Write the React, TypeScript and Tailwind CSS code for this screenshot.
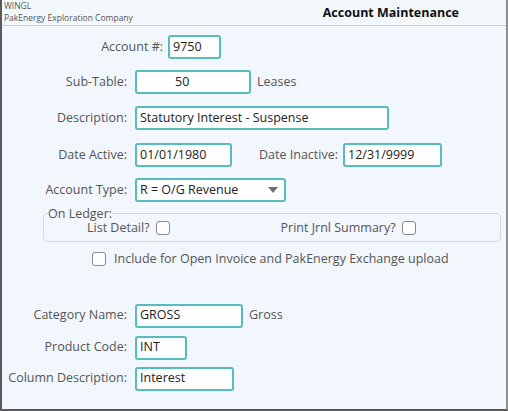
import React from 'react'

const font = { fontFamily: '"Open Sans", "Noto Sans", sans-serif' }

function Field({ value, className = '', pad = 'pl-[3px]' }: { value: string; className?: string; pad?: string }) {
  return (
    <div
      className={`h-[24px] flex items-center border-2 border-[#56bcbc] rounded-[3px] bg-white text-[12.5px] text-[#222] ${pad} ${className}`}
    >
      {value}
    </div>
  )
}

function Label({ text, className = 'w-[125px]' }: { text: string; className?: string }) {
  return <div className={`text-right text-[12.5px] text-[#555] shrink-0 ${className}`}>{text}</div>
}

function Check() {
  return <span className="inline-block w-[14px] h-[14px] border border-[#8a8a8a] rounded-[3px] bg-white" />
}

export default function App() {
  return (
    <div
      className="w-[508px] h-[411px] bg-[#f1f7fc] border-l-2 border-r-2 border-b-2 border-l-[#5a5a5a] border-r-[#8c8c8c] border-b-[#5a5a5a] flex flex-col overflow-hidden"
      style={font}
    >
      {/* Header */}
      <div className="h-[26px] shrink-0 flex items-start border-b border-[#c9cdd1] bg-[#f3f8fc]">
        <div className="pl-[2px] leading-[12px] text-[8.5px] text-[#555]">
          <div>WINGL</div>
          <div>PakEnergy Exploration Company</div>
        </div>
        <div className="ml-auto mr-[47px] mt-[4px] text-[12.5px] font-bold text-[#111]">Account Maintenance</div>
      </div>

      {/* Form */}
      <div className="flex flex-col pt-[9px]">
        <div className="flex items-center">
          <Label text="Account #:" className="w-[161px]" />
          <Field value="9750" className="ml-[5px] w-[53px]" />
        </div>

        <div className="flex items-center mt-[11px]">
          <Label text="Sub-Table:" />
          <Field value="50" className="ml-[8px] w-[116px]" pad="pl-[38px]" />
          <span className="ml-[6px] text-[12.5px] text-[#555]">Leases</span>
        </div>

        <div className="flex items-center mt-[12px]">
          <Label text="Description:" />
          <Field value="Statutory Interest - Suspense" className="ml-[8px] w-[254px]" />
        </div>

        <div className="flex items-center mt-[13px]">
          <Label text="Date Active:" />
          <Field value="01/01/1980" className="ml-[8px] w-[97px]" />
          <span className="ml-[27px] text-[12.5px] text-[#555]">Date Inactive:</span>
          <Field value="12/31/9999" className="ml-[5px] w-[99px]" />
        </div>

        <div className="flex items-center mt-[11px]">
          <Label text="Account Type:" />
          <div className="ml-[8px] w-[151px] h-[24px] flex items-center justify-between border-2 border-[#56bcbc] rounded-[3px] bg-white text-[12.5px] text-[#222] pl-[3px] pr-[6px]">
            <span>R = O/G Revenue</span>
            <svg width="10" height="6" viewBox="0 0 10 6">
              <path d="M0 0 L10 0 L5 6 Z" fill="#707070" />
            </svg>
          </div>
        </div>

        <fieldset className="ml-[41px] mr-[5px] mt-[3px] border border-[#d3d7db] rounded-[4px] pb-[5px]">
          <legend className="ml-[4px] text-[12.5px] text-[#555] leading-[17px]">On Ledger:</legend>
          <div className="flex items-center h-[16px] -mt-[2px]">
            <span className="ml-[43px] text-[12.5px] text-[#555]">List Detail?</span>
            <span className="ml-[6px] flex"><Check /></span>
            <span className="ml-[111px] text-[12.5px] text-[#555]">Print Jrnl Summary?</span>
            <span className="ml-[6px] flex"><Check /></span>
          </div>
        </fieldset>

        <div className="flex items-center mt-[8px] ml-[90px]">
          <Check />
          <span className="ml-[8px] text-[12.5px] text-[#555]">Include for Open Invoice and PakEnergy Exchange upload</span>
        </div>

        <div className="flex items-center mt-[35px]">
          <Label text="Category Name:" />
          <Field value="GROSS" className="ml-[8px] w-[108px]" />
          <span className="ml-[6px] text-[12.5px] text-[#555]">Gross</span>
        </div>

        <div className="flex items-center mt-[8px]">
          <Label text="Product Code:" />
          <Field value="INT" className="ml-[8px] w-[52px]" />
        </div>

        <div className="flex items-center mt-[7px]">
          <Label text="Column Description:" />
          <Field value="Interest" className="ml-[8px] w-[99px]" />
        </div>
      </div>
    </div>
  )
}
